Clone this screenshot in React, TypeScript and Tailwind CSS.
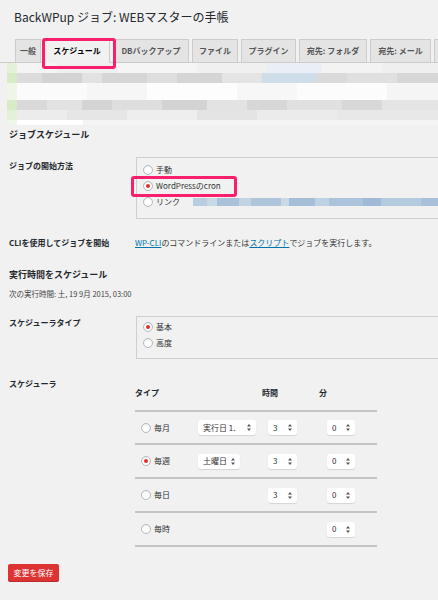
import type { ReactNode } from 'react';

type Seg = [number, string];

// pixelated notice block (blurred in the screenshot)
const bands: { h: number; segs: Seg[] }[] = [
  { h: 10, segs: [[10, '#e3f1d9'], [40, '#f4f4f4'], [60, '#efefef'], [80, '#f5f5f5'], [70, '#f0f0f0'], [55, '#e9eff4'], [60, '#f3f3f3'], [80, '#efefef']] },
  { h: 10, segs: [[10, '#d6ebc6'], [25, '#dcdcdc'], [40, '#d3d3d3'], [20, '#e2e2e2'], [45, '#d6d6d6'], [30, '#dedede'], [45, '#d5d5d5'], [40, '#e4e4e4'], [55, '#cfdde9'], [30, '#dadada'], [50, '#e0e0e0'], [70, '#d7d7d7']] },
  { h: 17, segs: [[10, '#eef6e8'], [70, '#fbfbfb'], [60, '#f6f6f6'], [90, '#fdfdfd'], [60, '#f7f7f7'], [90, '#fcfcfc'], [70, '#f5f5f5']] },
  { h: 10, segs: [[10, '#d6ebc6'], [30, '#d9d9d9'], [35, '#e2e2e2'], [30, '#d4d4d4'], [50, '#dedede'], [45, '#d3d3d3'], [40, '#e3e3e3'], [40, '#d7d7d7'], [55, '#e0e0e0'], [40, '#d8d8d8'], [60, '#e4e4e4']] },
  { h: 10, segs: [[10, '#e3f1d9'], [50, '#ececec'], [60, '#e6e6e6'], [70, '#eeeeee'], [60, '#e4e4e4'], [80, '#ebebeb'], [105, '#e8e8e8']] },
  { h: 5, segs: [[10, '#eef6e8'], [66, '#ffffff'], [355, '#f4f4f4']] },
];

const linkBlur: Seg[] = [
  [14, '#b9cde0'], [10, '#c9d8e6'], [22, '#a9c2da'], [12, '#c2d4e4'], [30, '#aec5dc'], [8, '#cbd9e7'], [26, '#a6bfd8'], [14, '#bfd2e3'], [34, '#abc3db'], [18, '#9fbad4'], [40, '#b4cadf'], [30, '#a8c0d9'],
];

const tabs = [
  { label: '一般', w: 'w-[26px]' },
  { label: 'スケジュール', w: 'w-[66px]', active: true },
  { label: 'DBバックアップ', w: 'w-[76px]' },
  { label: 'ファイル', w: 'w-[46px]' },
  { label: 'プラグイン', w: 'w-[55px]' },
  { label: '宛先: フォルダ', w: 'w-[68px]' },
  { label: '宛先: メール', w: 'w-[61px]' },
  { label: '', w: 'w-[60px]' },
];

function Radio({ checked }: { checked?: boolean }) {
  return (
    <span className="flex h-[10px] w-[10px] shrink-0 items-center justify-center rounded-full border border-[#b4b9be] bg-white shadow-[inset_0_1px_2px_rgba(0,0,0,0.08)]">
      {checked ? <span className="h-[4px] w-[4px] rounded-full bg-[#e0312f]" /> : null}
    </span>
  );
}

function RadioRow({ checked, children }: { checked?: boolean; children: ReactNode }) {
  return (
    <div className="flex h-[16px] items-center gap-[3px] text-[8px] leading-[12px] text-[#333]">
      <Radio checked={checked} />
      {children}
    </div>
  );
}

function Select({ w, children }: { w: string; children: ReactNode }) {
  return (
    <div className={`${w} flex h-[15px] items-center justify-between rounded-[3px] bg-white pl-[5px] pr-[5px] text-[8px] leading-[12px] text-[#333] shadow-[0_1px_1px_rgba(0,0,0,0.12)]`}>
      <span>{children}</span>
      <svg width="4" height="7" viewBox="0 0 4 7" className="shrink-0">
        <path d="M2 0 L4 2.6 H0 Z M2 7 L0 4.4 H4 Z" fill="#555" />
      </svg>
    </div>
  );
}

function SchedRow({ h, label, checked, day, hour, minute }: { h: string; label: string; checked?: boolean; day?: ReactNode; hour?: ReactNode; minute?: ReactNode }) {
  return (
    <>
      <div className={`${h} grid grid-cols-[63px_64px_57px_58px] items-center`}>
        <div className="flex items-center gap-[3px] pl-[6px] text-[8px] leading-[12px] text-[#333]">
          <Radio checked={checked} />
          {label}
        </div>
        <div>{day}</div>
        <div className="pl-[6px]">{hour}</div>
        <div className="pl-[8px]">{minute}</div>
      </div>
      <div className="h-[2px] bg-[#c4c4c4]" />
    </>
  );
}

export default function App() {
  return (
    <div className="h-[600px] w-[438px] overflow-hidden bg-[#f1f1f1] font-['Noto_Sans_CJK_JP','Noto_Sans',sans-serif] text-[#23282d]">
      <h1 className="h-[39px] pl-[14px] pt-[9px] text-[12px] leading-[16px] font-normal text-[#23282d]">BackWPup ジョブ: WEBマスターの手帳</h1>

      {/* tabs */}
      <div className="flex h-[24px] gap-[3px] border-b border-[#cccccc] pl-[15px] whitespace-nowrap">
        {tabs.map((t, i) => (
          <div key={i} className={`relative ${t.w} shrink-0`}>
            <div className={`flex h-[24px] items-center justify-center border border-[#cccccc] text-[8px] font-bold leading-[12px] ${t.active ? 'border-b-[#f1f1f1] bg-[#f1f1f1] text-[#000]' : 'bg-[#e4e4e4] text-[#555]'}`}>
              {t.label}
            </div>
            {t.active ? <div className="absolute left-[-2px] top-[-1px] z-10 h-[31px] w-[74px] rounded-[3px] border-[3px] border-[#f91f6c]" /> : null}
          </div>
        ))}
      </div>

      {/* blurred notice */}
      <div className="ml-[7px] flex flex-col">
        {bands.map((b, i) => (
          <div key={i} className="flex" style={{ height: b.h }}>
            {b.segs.map(([w, c], j) => (
              <div key={j} className="shrink-0" style={{ width: w, background: c }} />
            ))}
          </div>
        ))}
      </div>

      <div className="pl-[9px]">
        <h2 className="text-[9px] font-bold leading-[20px] text-[#23282d]">ジョブスケジュール</h2>

        {/* start method */}
        <div className="mt-[12px] flex">
          <div className="w-[127px] shrink-0 pt-[3px] text-[8px] font-bold leading-[12px]">ジョブの開始方法</div>
          <div className="relative h-[62px] w-[320px] shrink-0 border border-[#cfcfcf] pl-[6px] pt-[4px]">
            <RadioRow>手動</RadioRow>
            <RadioRow checked>WordPressのcron</RadioRow>
            <RadioRow>
              リンク
              <div className="ml-[10px] flex h-[8px]">
                {linkBlur.map(([w, c], j) => (
                  <div key={j} className="shrink-0" style={{ width: w, background: c }} />
                ))}
              </div>
            </RadioRow>
            <div className="absolute left-[-6px] top-[18px] h-[21px] w-[106px] rounded-[3px] border-[3px] border-[#f91f6c]" />
          </div>
        </div>

        {/* cli */}
        <div className="mt-[18px] flex text-[8px] leading-[12px]">
          <div className="w-[126px] shrink-0 font-bold">CLIを使用してジョブを開始</div>
          <div className="whitespace-nowrap text-[#333]">
            <span className="text-[#0073aa] underline">WP-CLI</span>のコマンドラインまたは<span className="text-[#0073aa] underline">スクリプト</span>でジョブを実行します。
          </div>
        </div>

        <h3 className="mt-[19px] text-[9px] font-bold leading-[14px]">実行時間をスケジュール</h3>
        <p className="mt-[6px] text-[7.5px] leading-[12px] text-[#444]">次の実行時間: 土, 19 9月 2015, 03:00</p>

        {/* scheduler type */}
        <div className="mt-[16px] flex">
          <div className="w-[127px] shrink-0 pt-[1px] text-[8px] font-bold leading-[12px]">スケジューラタイプ</div>
          <div className="h-[43px] w-[320px] shrink-0 border border-[#cfcfcf] pl-[6px] pt-[2px]">
            <RadioRow checked>基本</RadioRow>
            <RadioRow>高度</RadioRow>
          </div>
        </div>

        {/* scheduler */}
        <div className="mt-[19px] flex">
          <div className="w-[126px] shrink-0 text-[8px] font-bold leading-[12px]">スケジューラ</div>
          <div className="w-[242px] shrink-0">
            <div className="grid h-[32px] grid-cols-[63px_64px_57px_58px] pt-[9px] text-[8px] font-bold leading-[12px]">
              <div>タイプ</div>
              <div />
              <div>時間</div>
              <div>分</div>
            </div>
            <div className="h-[2px] bg-[#c4c4c4]" />
            <SchedRow h="h-[31px]" label="毎月" day={<Select w="w-[58px]">実行日 1.</Select>} hour={<Select w="w-[29px]">3</Select>} minute={<Select w="w-[28px]">0</Select>} />
            <SchedRow h="h-[32px]" label="毎週" checked day={<Select w="w-[42px]">土曜日</Select>} hour={<Select w="w-[29px]">3</Select>} minute={<Select w="w-[28px]">0</Select>} />
            <SchedRow h="h-[32px]" label="毎日" hour={<Select w="w-[29px]">3</Select>} minute={<Select w="w-[28px]">0</Select>} />
            <SchedRow h="h-[32px]" label="毎時" minute={<Select w="w-[28px]">0</Select>} />
          </div>
        </div>

        <button type="button" className="ml-[-1px] mt-[17px] flex h-[17px] w-[51px] items-center justify-center rounded-[2px] bg-[#dd3333] text-[8px] leading-[12px] text-white shadow-[0_1px_0_#ba2b2b]">
          変更を保存
        </button>
      </div>
    </div>
  );
}
